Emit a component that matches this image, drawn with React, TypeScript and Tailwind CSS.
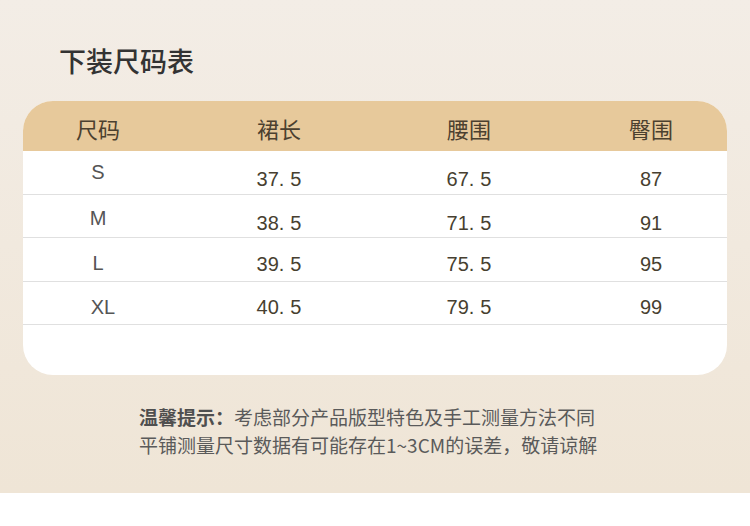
const rows = [
  { size: 'S', skirt: ['37', '5'], waist: ['67', '5'], hip: '87', labelCls: 'translate-y-0', numCls: 'translate-y-[7px]' },
  { size: 'M', skirt: ['38', '5'], waist: ['71', '5'], hip: '91', labelCls: 'translate-y-[2px]', numCls: 'translate-y-[7px]' },
  { size: 'L', skirt: ['39', '5'], waist: ['75', '5'], hip: '95', labelCls: 'translate-y-[4px]', numCls: 'translate-y-[5px]' },
  { size: 'XL', skirt: ['40', '5'], waist: ['79', '5'], hip: '99', labelCls: 'translate-y-[4px] translate-x-[5px]', numCls: 'translate-y-[4px]' },
];

const cjk = "font-['Noto_Sans_CJK_SC',sans-serif]";
const latin = "font-['Liberation_Sans','Noto_Sans_CJK_SC',sans-serif]";
const cols = 'grid grid-cols-[150px_212px_168px_174px]';

function Num({ parts }: { parts: string[] }) {
  return (
    <span>
      {parts[0]}.<span className="ml-[6px]">{parts[1]}</span>
    </span>
  );
}

export default function App() {
  return (
    <div className="w-[750px] h-[526px] bg-white overflow-hidden">
      <div className="h-[493px] bg-gradient-to-b from-[#f3ede6] to-[#efe5d6] flex flex-col">
        <h1 className={`${cjk} text-[27px] font-medium text-[#333333] pl-[59px] pt-[42px] leading-[38px]`}>下装尺码表</h1>

        <div className="mx-[23px] mt-[21px] h-[274px] bg-white rounded-[30px] overflow-hidden flex flex-col">
          <div className={`${cols} h-[50px] bg-[#e7c99b] items-center ${cjk} text-[22px] text-[#4b402f] pt-[4px]`}>
            <div className="text-center">尺码</div>
            <div className="text-center">裙长</div>
            <div className="text-center">腰围</div>
            <div className="text-center pl-[22px]">臀围</div>
          </div>
          {rows.map((r) => (
            <div key={r.size} className={`${cols} h-[43.5px] items-center border-b border-[#e0e0e0] ${latin} text-[20px]`}>
              <div className={`text-center text-[#555555] ${r.labelCls}`}>{r.size}</div>
              <div className={`text-center text-[#473f30] ${r.numCls}`}><Num parts={r.skirt} /></div>
              <div className={`text-center text-[#473f30] ${r.numCls}`}><Num parts={r.waist} /></div>
              <div className={`text-center pl-[22px] text-[#473f30] ${r.numCls}`}>{r.hip}</div>
            </div>
          ))}
        </div>

        <div className={`${cjk} text-[19px] leading-[28px] text-[#5a5a5a] pl-[139px] pt-[28px]`}>
          <p><span className="font-bold text-[#4f4f4f]">温馨提示：</span>考虑部分产品版型特色及手工测量方法不同</p>
          <p>平铺测量尺寸数据有可能存在1~3CM的误差，敬请谅解</p>
        </div>
      </div>
    </div>
  );
}
